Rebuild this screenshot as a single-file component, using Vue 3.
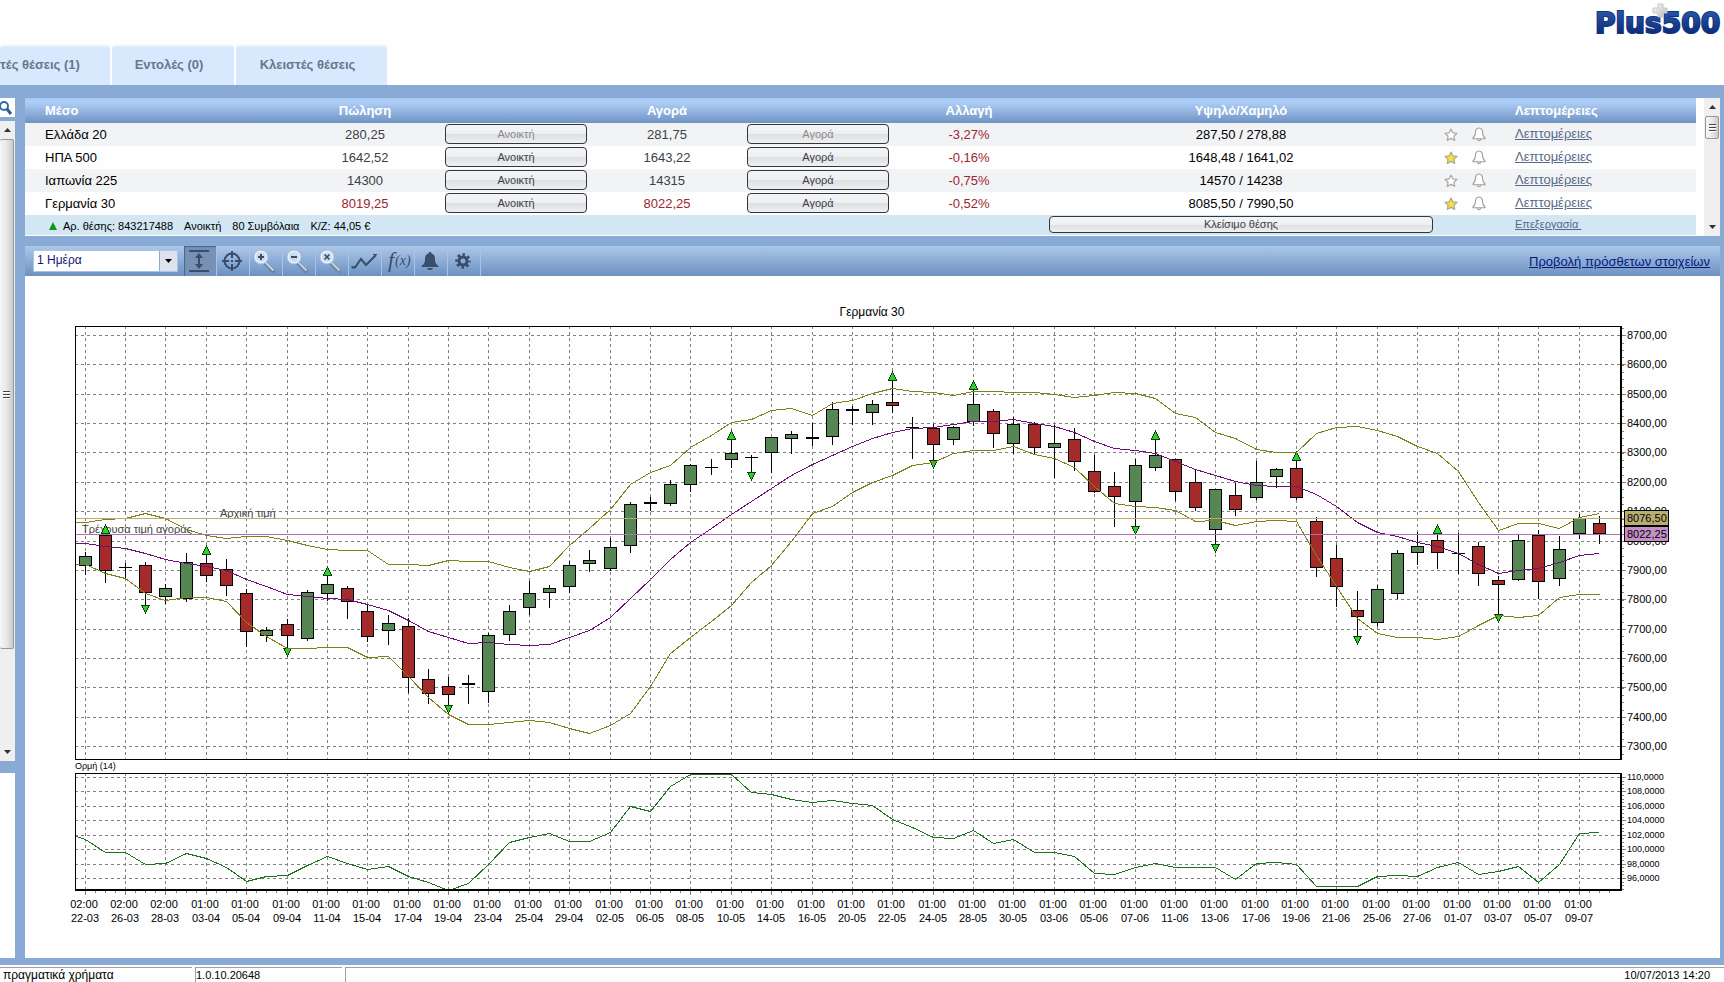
<script setup>
import { ref } from 'vue'

const timeframe = ref('1 Ημέρα')

const tabs = ['τές θέσεις (1)', 'Εντολές (0)', 'Κλειστές θέσεις']

const rows = [
  { name: 'Ελλάδα 20', sell: '280,25', buy: '281,75', change: '-3,27%', range: '287,50 / 278,88', closed: true },
  { name: 'ΗΠΑ 500', sell: '1642,52', buy: '1643,22', change: '-0,16%', range: '1648,48 / 1641,02', starred: true },
  { name: 'Ιαπωνία 225', sell: '14300', buy: '14315', change: '-0,75%', range: '14570 / 14238' },
  { name: 'Γερμανία 30', sell: '8019,25', buy: '8022,25', change: '-0,52%', range: '8085,50 / 7990,50', starred: true, falling: true },
]

// Chart geometry. Series values are offsets in thirds of a chart unit.
const plot = { left: 75, right: 1621, top: 326, bottom: 759 }
const momentumPlot = { top: 773, bottom: 890 }
const xAt = (i) => Math.round(84.7 + (i * 1494) / 74)
const priceY = (v) => Math.floor(310 + v / 3)
const momentumY = (v) => Math.floor(740 + v / 3)

// high, open/close top, open/close bottom, low, kind, marker direction, marker position
const candleData = [
  [727, 739, 767, 793, 'g'], [657, 676, 781, 818, 'r', 1, 657], [760, 772, 772, 805, 'd'], [756, 766, 848, 885, 'r', -1, 898],
  [823, 835, 860, 881, 'g'], [730, 757, 865, 875, 'g'], [732, 760, 797, 813, 'r', 1, 722], [747, 778, 827, 855, 'r'],
  [837, 850, 965, 1008, 'r'], [951, 961, 977, 995, 'g'], [927, 943, 977, 1015, 'r', -1, 1027], [840, 847, 986, 990, 'g'],
  [795, 823, 851, 870, 'g', 1, 785], [828, 835, 875, 926, 'r'], [884, 904, 980, 995, 'r'], [915, 940, 962, 1004, 'g'],
  [925, 949, 1103, 1148, 'r'], [1077, 1107, 1151, 1181, 'r'], [1102, 1129, 1154, 1185, 'r', -1, 1198], [1095, 1120, 1123, 1181, 'd'],
  [970, 976, 1145, 1178, 'g'], [885, 904, 974, 992, 'g'], [815, 850, 893, 914, 'g'], [825, 835, 848, 893, 'g'],
  [754, 766, 830, 846, 'g'], [720, 751, 761, 785, 'g'], [685, 712, 776, 782, 'g'], [577, 583, 707, 728, 'g'],
  [562, 577, 580, 600, 'd'], [511, 523, 581, 587, 'g'], [462, 466, 524, 545, 'g'], [448, 472, 472, 494, 'd'],
  [390, 430, 448, 471, 'g', 1, 377], [435, 441, 441, 487, 'd', -1, 498], [382, 382, 428, 487, 'g'], [364, 373, 386, 429, 'g'],
  [339, 382, 385, 407, 'd'], [277, 298, 380, 404, 'g'], [288, 298, 301, 342, 'd'], [270, 283, 308, 342, 'g'],
  [210, 277, 287, 308, 'r', 1, 200], [321, 352, 352, 446, 'd'], [342, 354, 404, 450, 'r', -1, 462], [348, 352, 389, 402, 'g'],
  [238, 283, 334, 345, 'g', 1, 227], [297, 304, 371, 413, 'r'], [321, 343, 401, 430, 'g'], [336, 343, 413, 432, 'r'],
  [347, 401, 413, 503, 'g'], [355, 388, 455, 482, 'r'], [435, 484, 545, 548, 'r'], [486, 529, 560, 648, 'r'],
  [447, 466, 575, 650, 'g', -1, 660], [388, 436, 473, 482, 'g', 1, 377], [448, 448, 545, 570, 'r'], [478, 517, 593, 602, 'r'],
  [538, 538, 659, 702, 'g', -1, 715], [521, 556, 599, 617, 'r'], [453, 517, 563, 567, 'g'], [474, 478, 500, 533, 'g'],
  [448, 475, 563, 569, 'r', 1, 438], [621, 634, 773, 800, 'r'], [705, 745, 830, 890, 'r'], [843, 901, 920, 978, 'r', -1, 991],
  [825, 838, 938, 947, 'g'], [720, 730, 851, 864, 'g'], [668, 709, 728, 762, 'g'], [668, 691, 728, 774, 'r', 1, 657],
  [670, 730, 730, 790, 'd'], [696, 709, 791, 827, 'r'], [800, 811, 824, 913, 'r', -1, 924], [673, 691, 809, 812, 'g'],
  [662, 676, 815, 864, 'r'], [678, 718, 806, 827, 'g'], [612, 626, 671, 685, 'g'], [620, 640, 671, 701, 'r'],
]

const candles = candleData.map(([high, top, bottom, low, kind, dir, mark], i) => {
  const x = xAt(i)
  const y = priceY(top)
  const h = Math.max(priceY(bottom) - y, 0)
  let marker = null
  if (dir) {
    const m = priceY(mark)
    marker = dir === 1
      ? `${x + 0.5},${m - 4} ${x + 4.5},${m + 4} ${x - 3.5},${m + 4}`
      : `${x + 0.5},${m + 4} ${x + 4.5},${m - 4} ${x - 3.5},${m - 4}`
  }
  return { x, y, h, high: priceY(high), low: priceY(low) + 1, kind, marker }
})

const upper = [637, 628, 626, 609, 626, 658, 676, 685, 679, 679, 691, 706, 718, 721, 721, 763, 763, 766, 751, 754, 754, 771, 784, 768, 706, 655, 598, 523, 487, 466, 412, 376, 338, 328, 301, 295, 317, 281, 271, 250, 235, 244, 247, 257, 243, 244, 247, 247, 253, 262, 256, 247, 250, 265, 310, 322, 367, 385, 418, 428, 427, 371, 353, 349, 361, 379, 409, 431, 485, 578, 662, 640, 640, 655, 623, 610]
const middle = [700, 710, 715, 730, 748, 760, 769, 781, 808, 830, 853, 859, 865, 869, 884, 902, 932, 964, 983, 1000, 997, 1003, 1006, 1003, 982, 960, 922, 865, 808, 748, 697, 655, 613, 574, 535, 496, 463, 436, 409, 385, 367, 355, 352, 343, 335, 334, 328, 340, 349, 367, 394, 415, 422, 430, 454, 479, 496, 514, 525, 530, 529, 554, 590, 636, 667, 680, 697, 710, 731, 763, 791, 782, 776, 758, 737, 730]
const lower = [764, 790, 804, 850, 871, 863, 862, 875, 938, 980, 1015, 1016, 1012, 1012, 1042, 1040, 1100, 1163, 1213, 1243, 1243, 1237, 1231, 1237, 1255, 1270, 1246, 1211, 1130, 1030, 982, 934, 886, 818, 767, 695, 610, 589, 547, 517, 496, 466, 458, 430, 421, 421, 409, 433, 445, 472, 530, 580, 589, 593, 602, 634, 632, 646, 634, 631, 634, 737, 828, 925, 970, 982, 983, 988, 978, 947, 917, 922, 916, 862, 853, 853]
const momentum = [298, 337, 337, 374, 370, 340, 354, 383, 424, 409, 406, 377, 349, 371, 388, 379, 409, 427, 450, 430, 373, 307, 292, 280, 303, 303, 277, 199, 214, 140, 104, 104, 102, 157, 163, 178, 187, 181, 190, 197, 239, 262, 292, 296, 272, 310, 298, 337, 338, 349, 400, 404, 383, 371, 382, 382, 382, 418, 371, 367, 374, 439, 439, 439, 410, 406, 410, 382, 367, 404, 394, 379, 427, 373, 280, 277]

const line = (values, start, scale) =>
  [`${plot.left + 1},${scale(start) + 0.5}`, ...values.map((v, i) => `${xAt(i) + 0.5},${scale(v) + 0.5}`)].join(' ')

const upperLine = line(upper, 637, priceY)
const middleLine = line(middle, 700, priceY)
const lowerLine = line(lower, 763, priceY)
const momentumLine = line(momentum, 288, momentumY)

const dates = '22-03 26-03 28-03 03-04 05-04 09-04 11-04 15-04 17-04 19-04 23-04 25-04 29-04 02-05 06-05 08-05 10-05 14-05 16-05 20-05 22-05 24-05 28-05 30-05 03-06 05-06 07-06 11-06 13-06 17-06 19-06 21-06 25-06 27-06 01-07 03-07 05-07 09-07'
  .split(' ')
  .map((date, i) => ({ date, time: i < 3 ? '02:00' : '01:00', x: xAt(i * 2) }))

const prices = Array.from({ length: 15 }, (_, i) => ({
  label: `${8700 - i * 100},00`,
  y: Math.round(335 + (i * 411) / 14),
}))
const priceTicks = Array.from({ length: 59 }, (_, i) => Math.round(328 + (i * 411) / 56)).filter((y) => y < plot.bottom)

const levels = Array.from({ length: 8 }, (_, i) => ({
  label: `${110 - i * 2},0000`,
  y: Math.round(777 + (i * 101) / 7),
}))
const levelTicks = Array.from({ length: 32 }, (_, i) => Math.round(777 + (i * 101) / 28))
const timeTicks = Array.from({ length: 152 }, (_, i) => Math.round(84.7 + (i * 1494) / 148))
</script>

<template>
  <div class="app">
    <header class="top">
      <nav class="tabs">
        <button v-for="t in tabs" :key="t" type="button" class="tab">{{ t }}</button>
      </nav>
      <svg class="logo" width="130" height="40" viewBox="0 0 130 40" role="img" aria-label="Plus500">
        <defs>
          <linearGradient id="logoFill" x1="0" y1="0" x2="0" y2="1">
            <stop offset="0" stop-color="#2c5fae" />
            <stop offset="1" stop-color="#041f6e" />
          </linearGradient>
          <linearGradient id="plusFill" x1="0" y1="0" x2="1" y2="1">
            <stop offset="0" stop-color="#fafafa" />
            <stop offset="1" stop-color="#b8babd" />
          </linearGradient>
        </defs>
        <text x="1" y="33" class="logo-text" fill="url(#logoFill)">Plus500</text>
        <path d="M64 4h5v4h4v5h-4v4h-5v-4h-5v-5h5z" fill="url(#plusFill)" stroke="#c6c8ca" stroke-width="1" />
      </svg>
    </header>

    <main class="body">
      <aside class="side">
        <button type="button" class="search" aria-label="Αναζήτηση">
          <svg width="15" height="19" viewBox="0 0 15 19"><circle cx="4" cy="8" r="4" fill="none" stroke="#2d6ba3" stroke-width="2" /><path d="M7 11l4 5" stroke="#2d5f95" stroke-width="3" /></svg>
        </button>
        <div class="scroll side-scroll">
          <svg class="arrow" viewBox="0 0 7 4"><path d="M0 4L3.5 0L7 4z" /></svg>
          <div class="thumb"><i></i><i></i><i></i></div>
          <div class="rest"></div>
          <svg class="arrow" viewBox="0 0 7 4"><path d="M0 0L3.5 4L7 0z" /></svg>
        </div>
        <div class="side-panel"></div>
      </aside>

      <section class="content">
        <div class="quotes">
          <table>
            <colgroup>
              <col class="c-name" /><col class="c-val" /><col class="c-btn" /><col class="c-val" /><col class="c-btn" />
              <col class="c-val" /><col class="c-range" /><col class="c-icons" /><col class="c-link" />
            </colgroup>
            <thead>
              <tr>
                <th class="left pad">Μέσο</th>
                <th>Πώληση</th>
                <th></th>
                <th>Αγορά</th>
                <th></th>
                <th>Αλλαγή</th>
                <th>Υψηλό/Χαμηλό</th>
                <th></th>
                <th class="left">Λεπτομέρειες</th>
              </tr>
            </thead>
            <tbody>
              <tr v-for="r in rows" :key="r.name">
                <td class="left pad name">{{ r.name }}</td>
                <td :class="{ red: r.falling }">{{ r.sell }}</td>
                <td class="act"><button type="button" class="trade" :disabled="r.closed">Ανοικτή</button></td>
                <td :class="{ red: r.falling }">{{ r.buy }}</td>
                <td class="act"><button type="button" class="trade" :disabled="r.closed">Αγορά</button></td>
                <td class="red">{{ r.change }}</td>
                <td class="name">{{ r.range }}</td>
                <td>
                  <div class="icons">
                    <button type="button" class="icon" aria-label="Αγαπημένο">
                      <svg width="14" height="14" viewBox="0 0 14 14"><path d="M7 1l1.8 3.8 4.2.5-3.1 2.9.8 4.2L7 10.4l-3.7 2 .8-4.2L1 5.3l4.2-.5z" :fill="r.starred ? '#fbe032' : '#fff'" stroke="#a9a9a0" stroke-width="1.2" stroke-linejoin="round" /></svg>
                    </button>
                    <button type="button" class="icon" aria-label="Ειδοποίηση">
                      <svg width="14" height="15" viewBox="0 0 14 15"><path d="M5.5 12c0 2.4 3 2.4 3 0M7 1C4.5 1 3.5 3 3.5 5.5 3.5 8.5 2.5 9.5 1 11v.8h12V11c-1.5-1.5-2.5-2.5-2.5-5.5C10.5 3 9.5 1 7 1z" fill="#fff" stroke="#9c9c9c" stroke-width="1.1" stroke-linejoin="round" /></svg>
                    </button>
                  </div>
                </td>
                <td class="left act"><a href="#">Λεπτομέρειες</a></td>
              </tr>
              <tr class="position">
                <td class="left" colspan="6">
                  <div class="pos">
                    <svg width="8" height="8" viewBox="0 0 8 8"><path d="M4 0l4 8H0z" fill="#0c9a0c" /></svg>
                    <span class="pos-id">Αρ. θέσης: 843217488</span>
                    <span>Ανοικτή</span>
                    <span>80 Συμβόλαια</span>
                    <span>Κ/Ζ: 44,05 €</span>
                  </div>
                </td>
                <td class="act"><button type="button" class="trade close">Κλείσιμο θέσης</button></td>
                <td></td>
                <td class="left act"><a href="#" class="small">Επεξεργασία&nbsp;</a></td>
              </tr>
            </tbody>
          </table>
          <div class="scroll quotes-scroll">
            <svg class="arrow" viewBox="0 0 7 4"><path d="M0 4L3.5 0L7 4z" /></svg>
            <div class="thumb"><i></i><i></i><i></i></div>
            <div class="rest"></div>
            <svg class="arrow" viewBox="0 0 7 4"><path d="M0 0L3.5 4L7 0z" /></svg>
          </div>
        </div>

        <div class="toolbar">
          <div class="select">
            <select v-model="timeframe" aria-label="Χρονικό διάστημα"><option>1 Ημέρα</option></select>
            <span class="drop"><svg width="7" height="4" viewBox="0 0 7 4"><path d="M0 0h7L3.5 4z" fill="#000" /></svg></span>
          </div>
          <button type="button" class="tool on" aria-label="Αυτόματη κλίμακα">
            <svg width="22" height="24" viewBox="0 0 22 24"><path d="M1 2h20M1 22h20" stroke="#3a4d6b" stroke-width="2" /><path d="M11 4l4 5h-3v6h3l-4 5-4-5h3V9H7z" fill="#3a4d6b" /></svg>
          </button>
          <button type="button" class="tool" aria-label="Σταυρόνημα">
            <svg width="22" height="22" viewBox="0 0 22 22" fill="none" stroke="#3a4d6b"><circle cx="11" cy="11" r="7.5" stroke-width="2" /><path d="M11 1v7M11 14v7M1 11h7M14 11h7" stroke-width="2" /><path d="M10 11h2" stroke-width="2" /></svg>
          </button>
          <button v-for="z in ['plus', 'minus', 'reset']" :key="z" type="button" class="tool" :aria-label="'Ζουμ ' + z">
            <svg width="24" height="24" viewBox="0 0 24 24">
              <path d="M12 14l8 8" stroke="#71829b" stroke-width="4" stroke-linecap="round" />
              <path d="M12 13l8 8" stroke="#c3d1e2" stroke-width="2" stroke-linecap="round" />
              <circle cx="8" cy="8" r="6" fill="#c9dcf2" stroke="#e9f1fa" stroke-width="2" />
              <circle cx="8" cy="8" r="7" fill="none" stroke="#a3bcdc" stroke-width="1" />
              <path v-if="z === 'plus'" d="M5 8h6M8 5v6" stroke="#3a4d6b" stroke-width="2" />
              <path v-else-if="z === 'minus'" d="M5 8h6" stroke="#3a4d6b" stroke-width="2" />
              <path v-else d="M5.5 5.5l5 5M10.5 5.5l-5 5" stroke="#3a4d6b" stroke-width="1.6" />
            </svg>
          </button>
          <button type="button" class="tool" aria-label="Γραμμή">
            <svg width="26" height="16" viewBox="0 0 26 16" fill="none" stroke="#3a4d6b" stroke-width="2"><path d="M1 14.5h3L10 6l5 6L25 2" /><path d="M0 14h4M22 1.5h4" stroke-width="1" /></svg>
          </button>
          <button type="button" class="tool" aria-label="Δείκτες">
            <svg width="30" height="28" viewBox="0 0 30 28"><text x="6" y="20" class="fx-big">f</text><text x="13" y="18" class="fx-small">(x)</text></svg>
          </button>
          <button type="button" class="tool" aria-label="Ειδοποιήσεις">
            <svg width="18" height="20" viewBox="0 0 18 20"><path d="M9 1c1 0 1.5.6 1.5 1.5C13 3.2 14 5 14 8c0 4 1 5 3.5 7v1H.5v-1C3 13 4 12 4 8c0-3 1-4.8 3.5-5.5C7.5 1.6 8 1 9 1zM6 17h6c-.5 2.7-5.5 2.7-6 0z" fill="#3a4d6b" /></svg>
          </button>
          <button type="button" class="tool" aria-label="Ρυθμίσεις">
            <svg width="16" height="16" viewBox="0 0 16 16"><circle cx="8" cy="8" r="4" fill="none" stroke="#3a4d6b" stroke-width="3" /><circle cx="8" cy="8" r="6.3" fill="none" stroke="#3a4d6b" stroke-width="3" stroke-dasharray="2.5 2.45" stroke-dashoffset="1.25" /></svg>
          </button>
          <a href="#" class="more">Προβολή πρόσθετων στοιχείων</a>
        </div>

        <div class="chart">
          <svg viewBox="25 276 1695 682" role="img" aria-label="Γερμανία 30">
            <text x="872" y="316" text-anchor="middle" class="t12">Γερμανία 30</text>

            <g class="grid">
              <line v-for="p in prices" :key="p.label" :x1="plot.left" :x2="plot.right" :y1="p.y + 0.5" :y2="p.y + 0.5" />
              <line v-for="l in levels" :key="l.label" :x1="plot.left" :x2="plot.right" :y1="l.y + 0.5" :y2="l.y + 0.5" />
              <template v-for="d in dates" :key="d.date">
                <line :x1="d.x + 0.5" :x2="d.x + 0.5" :y1="plot.top" :y2="plot.bottom" />
                <line :x1="d.x + 0.5" :x2="d.x + 0.5" :y1="momentumPlot.top" :y2="momentumPlot.bottom" />
              </template>
            </g>

            <g class="ticks">
              <line v-for="p in prices" :key="p.label" x1="1621" x2="1626" :y1="p.y + 0.5" :y2="p.y + 0.5" />
              <line v-for="y in priceTicks" :key="'p' + y" x1="1621" x2="1624" :y1="y + 0.5" :y2="y + 0.5" />
              <line v-for="l in levels" :key="l.label" x1="1621" x2="1626" :y1="l.y + 0.5" :y2="l.y + 0.5" />
              <line v-for="y in levelTicks" :key="'l' + y" x1="1621" x2="1624" :y1="y + 0.5" :y2="y + 0.5" />
              <line v-for="x in timeTicks" :key="'t' + x" :x1="x + 0.5" :x2="x + 0.5" y1="891" y2="893" />
              <line v-for="d in dates" :key="d.date" :x1="d.x + 0.5" :x2="d.x + 0.5" y1="891" y2="895" />
            </g>

            <text x="220" y="517" class="t11 soft">Αρχική τιμή</text>
            <text x="82" y="533" class="t11 soft">Τρέχουσα τιμή αγοράς</text>

            <g v-for="c in candles" :key="c.x" class="candle">
              <line :x1="c.x + 0.5" :x2="c.x + 0.5" :y1="c.high" :y2="c.low" />
              <rect v-if="c.kind === 'd'" :x="c.x - 6" :y="c.y" width="13" :height="c.h + 1" class="doji" />
              <rect v-else :x="c.x - 6 + 0.5" :y="c.y + 0.5" width="12" :height="c.h" :class="c.kind" />
              <polygon v-if="c.marker" :points="c.marker" />
            </g>

            <g class="series">
              <polyline :points="upperLine" stroke="#808018" />
              <polyline :points="lowerLine" stroke="#808018" />
              <polyline :points="middleLine" stroke="#6d0f78" />
              <polyline :points="momentumLine" stroke="#1b741b" />
              <line x1="76" x2="1625" y1="518.5" y2="518.5" stroke="#b7ad71" />
              <line x1="76" x2="1625" y1="534.5" y2="534.5" stroke="#b070b4" />
            </g>

            <g class="frame">
              <path d="M75.5 759.5V326.5H1621M75 759.5H1621" />
              <path d="M75.5 890V773.5H1621" />
              <path d="M1621 326V760M1621 773V891M75 890H1622" class="thick" />
            </g>

            <text v-for="p in prices" :key="p.label" x="1627" :y="p.y + 4" class="t11">{{ p.label }}</text>
            <text v-for="l in levels" :key="l.label" x="1627" :y="l.y + 3" class="t9">{{ l.label }}</text>
            <rect x="1624.5" y="510.5" width="44" height="15" fill="#b7ad71" stroke="#000" />
            <rect x="1624.5" y="526.5" width="44" height="15" fill="#c48fc7" stroke="#000" />
            <text x="1627" y="522" class="t11">8076,50</text>
            <text x="1627" y="538" class="t11">8022,25</text>

            <text x="75" y="769" class="t9">Ορμή (14)</text>
            <template v-for="d in dates" :key="d.date">
              <text :x="d.x - 1" y="908" text-anchor="middle" class="t11">{{ d.time }}</text>
              <text :x="d.x" y="922" text-anchor="middle" class="t11">{{ d.date }}</text>
            </template>
          </svg>
        </div>
      </section>
    </main>

    <footer class="status">
      <span class="s1">πραγματικά χρήματα</span>
      <span class="s2">1.0.10.20648</span>
      <span class="s3">10/07/2013 14:20</span>
    </footer>
  </div>
</template>

<style>
body {
  margin: 0;
  background: #fff;
}
</style>

<style scoped>
.app {
  min-height: 100vh;
  display: flex;
  flex-direction: column;
  font-family: "Liberation Sans", Arial, sans-serif;
  font-size: 13px;
  color: #000;
  background: #fefefe;
}
button {
  font-family: inherit;
  padding: 0;
  margin: 0;
  border: 0;
  background: none;
}
.top {
  height: 85px;
  display: flex;
  justify-content: space-between;
}
.tabs {
  display: flex;
  align-items: flex-end;
  gap: 2px;
}
.tab {
  height: 40px;
  padding: 0 8px 3px 0;
  background: #d9e9fd;
  border-top: 2px solid #e6f1fe;
  border-radius: 3px 3px 0 0;
  color: #66778f;
  font-size: 13px;
  font-weight: bold;
  white-space: nowrap;
}
.tab:first-child {
  width: 110px;
  text-align: left;
}
.tab:nth-child(2) {
  width: 122px;
}
.tab:nth-child(3) {
  width: 151px;
}
.logo-text {
  font-family: "DejaVu Sans", sans-serif;
  font-weight: bold;
  font-size: 28px;
  stroke: #12347e;
  stroke-width: 2px;
  paint-order: stroke;
}
.body {
  flex: 1;
  display: flex;
  gap: 10px;
  padding: 13px 4px 7px 0;
  background: #8aaad6;
}
.side {
  width: 15px;
  flex: none;
  display: flex;
  flex-direction: column;
}
.search {
  height: 19px;
  background: #fff;
  margin-bottom: 4px;
}
.search svg {
  display: block;
}
.side-panel {
  height: 185px;
  background: #fefefe;
  margin-top: 12px;
}
.scroll {
  display: flex;
  flex-direction: column;
  align-items: center;
  background: #efefef;
}
.arrow {
  width: 7px;
  height: 4px;
  flex: none;
  margin: 7px 0;
  fill: #333;
}
.thumb {
  box-sizing: border-box;
  display: flex;
  flex-direction: column;
  align-items: center;
  justify-content: center;
  gap: 2px;
  border: 1px solid #979797;
  border-radius: 2px;
  background: linear-gradient(90deg, #f6f6f6, #e8e8e9 50%, #c9cacc);
}
.thumb i {
  width: 7px;
  height: 1px;
  background: #444;
  box-shadow: 0 1px #fff;
}
.side-scroll {
  flex: 1;
}
.side-scroll .thumb {
  flex: 510;
  width: 14px;
  margin-right: 2px;
  border-left: 0;
}
.side-scroll .rest {
  flex: 94;
}
.content {
  flex: 1;
  min-width: 0;
  display: flex;
  flex-direction: column;
}
.quotes {
  display: flex;
  gap: 8px;
  background: #fefefe;
}
.quotes-scroll {
  width: 16px;
  flex: none;
}
.quotes-scroll .thumb {
  width: 14px;
  height: 23px;
}
.quotes-scroll .rest {
  flex: 1;
}
table {
  flex: 1;
  width: 100%;
  min-width: 0;
  table-layout: fixed;
  border-collapse: collapse;
  margin-bottom: 1px;
}
.c-name { width: 260px; }
.c-val { width: 160px; }
.c-btn { width: 142px; }
.c-range { width: 384px; }
.c-icons { width: 82px; }
.c-link { width: 181px; }
th,
td {
  padding: 0;
  text-align: center;
  white-space: nowrap;
}
th {
  height: 25px;
  color: #fff;
  font-weight: bold;
}
thead tr {
  background: linear-gradient(#a3c8f6, #b0cff8 15%, #6f93c3);
}
td {
  height: 23px;
  color: #3b3f48;
}
tbody tr:nth-child(odd) {
  background: #f2f3f5;
}
td.act {
  height: 21px;
  padding-bottom: 2px;
}
.left {
  text-align: left;
}
.pad {
  padding-left: 20px;
}
.name {
  color: #000;
}
td.red {
  color: #9c2730;
}
.trade {
  display: block;
  box-sizing: border-box;
  width: 100%;
  height: 20px;
  border: 1px solid #33363c;
  border-radius: 4px;
  background: linear-gradient(#f4f5f6, #eeeff1 50%, #dedfe1 52%, #eff0f2);
  color: #3b3f48;
  font-size: 11px;
  line-height: 18px;
}
.trade:disabled {
  color: #8b8b8b;
}
tbody tr.position {
  background: #d2e7f3;
}
.position td {
  height: 20px;
}
.position td.act {
  height: 18px;
}
.close {
  height: 17px;
  line-height: 14px;
}
.pos {
  display: flex;
  align-items: center;
  padding-top: 2px;
  padding-left: 24px;
  font-size: 11px;
  color: #000;
}
.pos span {
  margin-right: 11px;
}
.pos .pos-id {
  margin-left: 6px;
}
.icons {
  display: flex;
  gap: 14px;
  padding-left: 11px;
}
.icon {
  width: 14px;
  height: 15px;
}
.icon svg {
  display: block;
}
a {
  color: #56698a;
}
a.small {
  display: block;
  font-size: 11px;
  line-height: 14px;
}
.toolbar {
  display: flex;
  align-items: center;
  height: 30px;
  margin-top: 10px;
  padding-left: 8px;
  background: linear-gradient(#acc8e9, #6d91c2);
}
.select {
  display: flex;
  width: 145px;
  height: 22px;
  margin-right: 6px;
  box-sizing: border-box;
  border: 1px solid #a9c4e6;
  background: #fff;
  position: relative;
}
.select select {
  appearance: none;
  width: 100%;
  border: 0;
  outline: 0;
  padding: 0 20px 2px 3px;
  background: transparent;
  font-family: inherit;
  font-size: 12px;
  color: #14147a;
}
.drop {
  position: absolute;
  right: 0;
  top: 0;
  bottom: 0;
  width: 17px;
  display: flex;
  align-items: center;
  justify-content: center;
  background: #dde2ee;
  border-left: 1px solid #8aaad6;
  pointer-events: none;
}
.tool {
  box-sizing: border-box;
  width: 33px;
  height: 30px;
  flex: none;
  display: flex;
  align-items: center;
  justify-content: center;
  padding-right: 2px;
  border-right: 1px solid #a9c3e4;
}
.tool.on {
  background: #7790b5;
  box-shadow: inset 1px 1px 1px #4d6489;
}
.fx-big,
.fx-small {
  font-family: "Liberation Serif", serif;
  font-style: italic;
  fill: #3a4d6b;
}
.fx-big {
  font-size: 22px;
}
.fx-small {
  font-size: 14px;
}
.more {
  margin-left: auto;
  margin-right: 10px;
  color: #06177a;
}
.chart {
  flex: 1;
  background: #fefefe;
}
.chart svg {
  display: block;
  width: 100%;
  height: auto;
}
.grid line {
  stroke: #808080;
  stroke-dasharray: 3 3;
  shape-rendering: crispEdges;
}
.ticks line {
  stroke: #808080;
  shape-rendering: crispEdges;
}
.candle {
  shape-rendering: crispEdges;
}
.candle line,
.candle rect {
  stroke: #000;
}
.candle .doji {
  stroke: none;
  fill: #000;
}
.candle .g {
  fill: #568654;
}
.candle .r {
  fill: #a52a2a;
}
.candle polygon {
  fill: #28d428;
  stroke: #063c06;
}
.series {
  fill: none;
  shape-rendering: crispEdges;
}
.frame path {
  fill: none;
  stroke: #000;
  shape-rendering: crispEdges;
}
.frame .thick {
  stroke-width: 2px;
}
.t12 {
  font-size: 12px;
}
.t11 {
  font-size: 11px;
}
.t9 {
  font-size: 9px;
}
.soft {
  fill: #444;
}
.status {
  display: flex;
  gap: 3px;
  padding-top: 2px;
  font-size: 11px;
  line-height: 14px;
}
.status span {
  border-top: 1px solid #a0a0a0;
}
.s1 {
  width: 189px;
  padding-left: 3px;
  font-size: 12px;
}
.s2 {
  width: 146px;
  border-left: 1px solid #a0a0a0;
}
.s3 {
  flex: 1;
  border-left: 1px solid #a0a0a0;
  text-align: right;
  padding-right: 14px;
}
</style>
